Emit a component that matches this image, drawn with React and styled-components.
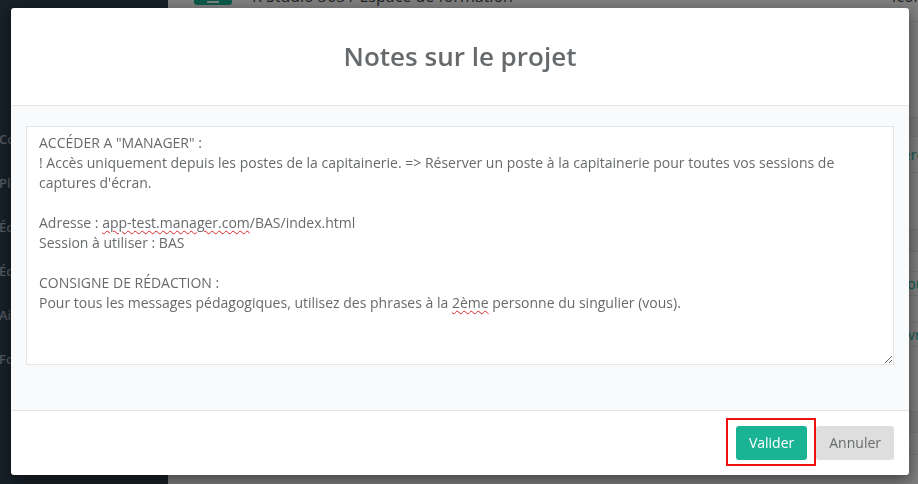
import styled, { createGlobalStyle } from "styled-components";

const GlobalStyle = createGlobalStyle`
  html, body {
    margin: 0;
    padding: 0;
    height: 100%;
    overflow: hidden;
    font-family: "Open Sans", "Noto Sans", sans-serif;
  }
  * {
    box-sizing: border-box;
  }
`;

const navItems = ["Contenus", "Planning", "Écrans", "Équipe", "Aide", "Formation"];

const rows = [
  { h: 96 },
  { h: 19, shade: true },
  { h: 36, link: "Gérer" },
  { h: 57 },
  { h: 22, shade: true },
  { h: 20 },
  { h: 24, link: "Retour" },
  { h: 27 },
  { h: 24, link: "Ouvrir" },
  { h: 65 },
  { h: 21, shade: true },
  { h: 22 },
];

const App = () => {
  return (
    <>
      <GlobalStyle />
      <Page>
        <Sidebar>
          {navItems.map((item) => (
            <NavItem key={item}>{item}</NavItem>
          ))}
        </Sidebar>
        <Main>
          <TopBar>
            <MenuButton>
              <span></span>
            </MenuButton>
            <Breadcrumb>K Studio 363 / Espace de formation</Breadcrumb>
            <UserName>Iconum</UserName>
          </TopBar>
          {rows.map((row, i) => (
            <Row key={i} $h={row.h} $shade={row.shade}>
              {row.link && <RowLink>{row.link}</RowLink>}
            </Row>
          ))}
        </Main>
      </Page>

      <Backdrop />

      <ModalWrap>
        <Modal>
          <ModalHeader>
            <Title>Notes sur le projet</Title>
          </ModalHeader>
          <ModalBody>
            <NoteArea>
              {`ACCÉDER A "MANAGER" :
! Accès uniquement depuis les postes de la capitainerie. => Réserver un poste à la capitainerie pour toutes vos sessions de captures d'écran.

Adresse : `}
              <Misspelled>app-test.manager.com</Misspelled>
              {`/BAS/index.html
Session à utiliser : BAS

CONSIGNE DE RÉDACTION :
Pour tous les messages pédagogiques, utilisez des phrases à la `}
              <Misspelled>2ème</Misspelled>
              {` personne du singulier (vous).`}
            </NoteArea>
          </ModalBody>
          <ModalFooter>
            <Highlight>
              <Button $primary>Valider</Button>
            </Highlight>
            <Button>Annuler</Button>
          </ModalFooter>
        </Modal>
      </ModalWrap>
    </>
  );
};

const Page = styled.div`
  display: flex;
  height: 100vh;
  background: #ffffff;
`;

const Sidebar = styled.nav`
  width: 168px;
  flex-shrink: 0;
  background: #2f4050;
  padding-top: 117px;
  display: flex;
  flex-direction: column;
`;

const NavItem = styled.div`
  height: 44px;
  display: flex;
  align-items: center;
  margin-left: -1px;
  color: #a7b1c2;
  font-size: 13px;
  font-weight: 600;
`;

const Main = styled.div`
  flex: 1;
  display: flex;
  flex-direction: column;
  background: #ffffff;
`;

const TopBar = styled.div`
  height: 22px;
  display: flex;
  align-items: flex-start;
  padding-left: 26px;
  border-bottom: 1px solid #e7eaec;
  overflow: hidden;
`;

const MenuButton = styled.div`
  width: 38px;
  height: 34px;
  margin-top: -29px;
  background: #1ab394;
  border-radius: 3px;
  display: flex;
  align-items: flex-end;
  justify-content: center;
  padding-bottom: 2px;
  span {
    width: 12px;
    height: 2px;
    background: #ffffff;
  }
`;

const Breadcrumb = styled.div`
  margin-left: 20px;
  margin-top: -15px;
  font-size: 16px;
  line-height: 22px;
  color: #444;
`;

const UserName = styled.div`
  margin-left: auto;
  margin-right: -30px;
  margin-top: -15px;
  font-size: 16px;
  line-height: 22px;
  color: #444;
`;

const Row = styled.div`
  height: ${(p) => p.$h}px;
  flex-shrink: 0;
  border-bottom: 1px solid #e7eaec;
  background: ${(p) => (p.$shade ? "#f3f3f4" : "#ffffff")};
  display: flex;
  align-items: center;
  justify-content: flex-end;
  overflow: hidden;
`;

const RowLink = styled.span`
  color: #1ab394;
  font-size: 14px;
  margin-right: -12px;
`;

const Backdrop = styled.div`
  position: fixed;
  inset: 0;
  background: rgba(0, 0, 0, 0.5);
`;

const ModalWrap = styled.div`
  position: fixed;
  inset: 0;
  padding: 8px 9px 0 11px;
`;

const Modal = styled.div`
  background: #ffffff;
  border-radius: 3px;
  box-shadow: 0 5px 15px rgba(0, 0, 0, 0.5);
  overflow: hidden;
`;

const ModalHeader = styled.div`
  padding: 30px 15px;
  border-bottom: 1px solid #e5e5e5;
  text-align: center;
`;

const Title = styled.h4`
  margin: 0;
  font-size: 26px;
  line-height: 37px;
  font-weight: 600;
  color: #676a6c;
`;

const ModalBody = styled.div`
  background: #f8fafb;
  padding: 20px 15px 30px;
`;

const NoteArea = styled.div`
  height: 239px;
  margin-bottom: 15px;
  padding: 6px 12px;
  background: #ffffff;
  border: 1px solid #e5e6e7;
  color: #676a6c;
  font-size: 14px;
  line-height: 20px;
  white-space: pre-wrap;
  overflow: auto;
  resize: vertical;
`;

const Misspelled = styled.span`
  text-decoration: underline wavy #e0242a;
  text-decoration-thickness: 1px;
  text-underline-offset: 2px;
`;

const ModalFooter = styled.div`
  display: flex;
  justify-content: flex-end;
  align-items: center;
  gap: 9px;
  padding: 15px;
  border-top: 1px solid #e5e5e5;
`;

const Highlight = styled.span`
  position: relative;
  display: inline-flex;
  &::after {
    content: "";
    position: absolute;
    top: -8px;
    bottom: -6px;
    left: -10px;
    right: -9px;
    border: 2px solid #ee1111;
    pointer-events: none;
  }
`;

const Button = styled.button`
  height: 34px;
  padding: 6px 13px;
  border: none;
  border-radius: 3px;
  font-family: "Open Sans", "Noto Sans", sans-serif;
  font-size: 14px;
  line-height: 20px;
  cursor: pointer;
  background: ${(p) => (p.$primary ? "#1ab394" : "#dedede")};
  color: ${(p) => (p.$primary ? "#ffffff" : "#676a6c")};
`;

export default App;
